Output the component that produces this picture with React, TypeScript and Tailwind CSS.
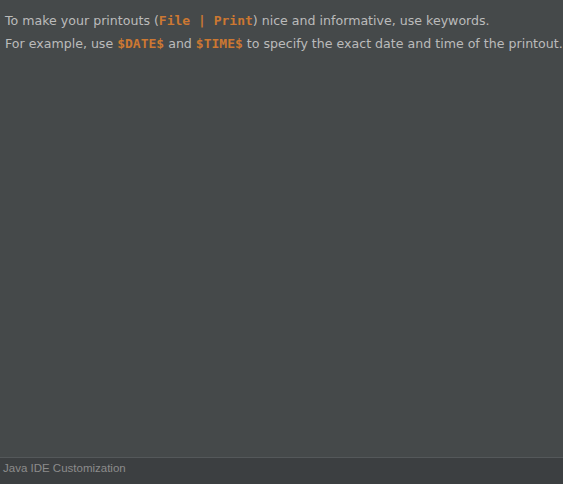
export default function App() {
  const code = "font-['DejaVu_Sans_Mono',monospace] font-bold text-[#cc7832] text-[13px]"
  return (
    <div className="flex h-[484px] w-[563px] flex-col bg-[#45494a] font-['DejaVu_Sans',Tahoma,sans-serif] text-[#bbbbbb]">
      <div className="flex flex-1 flex-col gap-[6px] pl-[5px] pt-[12px] text-[12.6px] leading-[17px]">
        <p className="whitespace-nowrap">
          To make your printouts (<span className={code}>File | Print</span>) nice and informative, use keywords.
        </p>
        <p className="whitespace-nowrap">
          For example, use <span className={code}>$DATE$</span> and <span className={code}>$TIME$</span> to specify the exact date and time of the printout.
        </p>
      </div>
      <div className="flex h-[27px] items-start border-t border-[#54585a] bg-[#3c3f41] pl-[3px] pt-[2px] font-['Liberation_Sans',sans-serif] text-[11.5px] text-[#8c8c8c]">
        Java IDE Customization
      </div>
    </div>
  )
}
